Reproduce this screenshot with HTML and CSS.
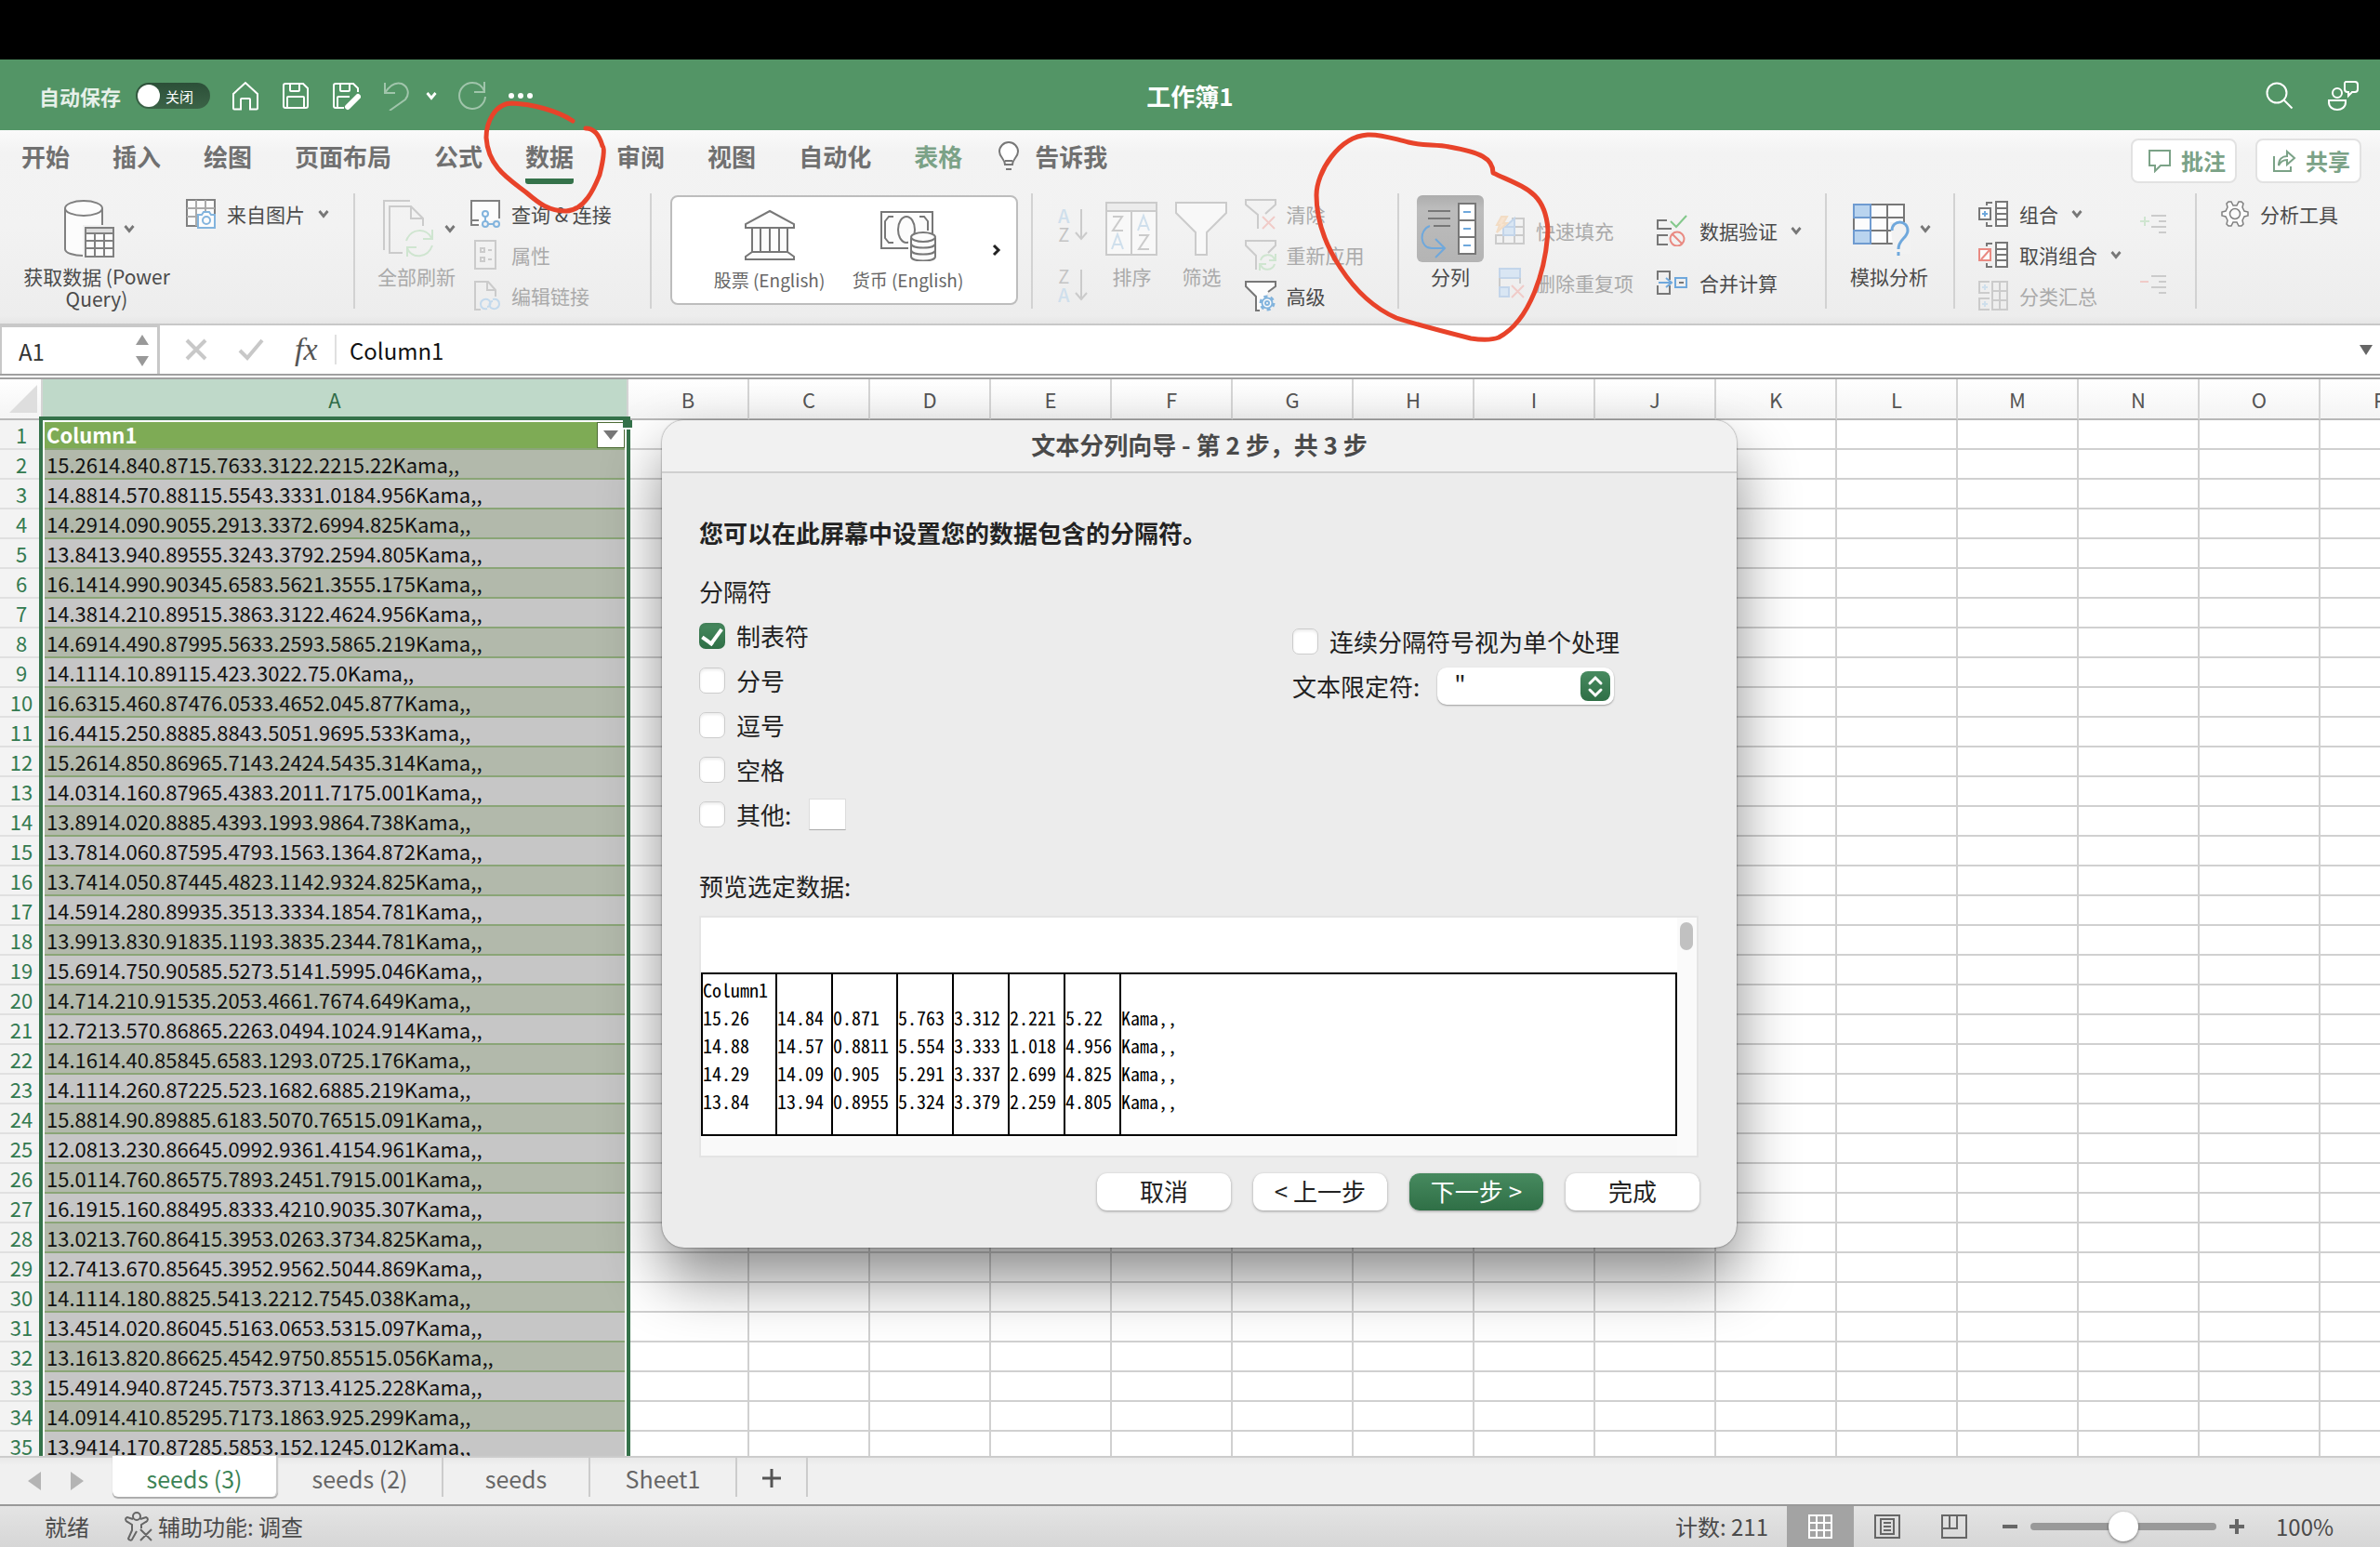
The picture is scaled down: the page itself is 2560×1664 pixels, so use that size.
FILE: index.html
```html
<!DOCTYPE html>
<html lang="zh-CN">
<head>
<meta charset="utf-8">
<title>工作簿1</title>
<link rel="stylesheet" href="styles.css">
</head>
<body>
<svg class="defs" aria-hidden="true">
  <symbol id="chev" viewBox="0 0 12 12"><path d="M1.5 3 6 8.500 10.500 3" fill="none" stroke="currentColor" stroke-width="2.800"/></symbol>
  <symbol id="outline" viewBox="0 0 28 22"><path d="M12 1h16M20 7h8M12 13h16M20 19h8" stroke="#cbcbcb" stroke-width="2" fill="none"/></symbol>
</svg>

<div class="notch"></div>

<header class="titlebar">
  <div class="quick">
    <label class="autosave" for="autosave">自动保存</label>
    <button class="toggle" id="autosave" type="button"><i></i>关闭</button>
    <button class="tool" type="button" aria-label="主页"><svg width="32" height="32" viewBox="0 0 32 32"><path d="M3 14 16 2l13 12v15.500a1 1 0 0 1-1 1h-7V20a1 1 0 0 0-1-1h-8a1 1 0 0 0-1 1v10.500H4a1 1 0 0 1-1-1z"/></svg></button>
    <button class="tool" type="button" aria-label="保存"><svg width="32" height="32" viewBox="0 0 32 32"><path d="M3 5a2 2 0 0 1 2-2h19l5 5v19a2 2 0 0 1-2 2H5a2 2 0 0 1-2-2zM10 3v7a1 1 0 0 0 1 1h8a1 1 0 0 0 1-1V3M7 29V18a1 1 0 0 1 1-1h16a1 1 0 0 1 1 1v11"/></svg></button>
    <button class="tool" type="button" aria-label="另存为"><svg width="32" height="32" viewBox="0 0 32 32"><path d="M14 29H5a2 2 0 0 1-2-2V5a2 2 0 0 1 2-2h19l5 5v4M10 3v7a1 1 0 0 0 1 1h8a1 1 0 0 0 1-1V3M7 29V18a1 1 0 0 1 1-1h12"/><path d="m18 28 11-11" stroke-width="6" stroke-linecap="round"/></svg></button>
    <div class="undo">
      <button class="tool dim" type="button" aria-label="撤消"><svg width="32" height="32" viewBox="0 0 32 32"><path d="M4 2v11h11M4 13C9 5 15 1 22 3c7 3 9 11 4 17L9 32"/></svg></button>
      <button class="tool" type="button" aria-label="撤消选项"><svg width="12" height="12"><use href="#chev"/></svg></button>
    </div>
    <button class="tool dim" type="button" aria-label="恢复"><svg width="32" height="32" viewBox="0 0 32 32"><path d="M29 1v11H18M29 11C26 4 20 2 16 2A14 14 0 1 0 30 17"/></svg></button>
    <button class="tool" type="button" aria-label="更多"><svg width="28" height="8" viewBox="0 0 28 8"><g class="solid"><circle cx="4" cy="4" r="3"/><circle cx="14" cy="4" r="3"/><circle cx="24" cy="4" r="3"/></g></svg></button>
  </div>
  <h1 class="doc">工作簿1</h1>
  <div class="account">
    <button class="tool" type="button" aria-label="搜索"><svg width="32" height="32" viewBox="0 0 32 32"><circle cx="13" cy="13" r="10.500"/><path d="m20.500 20.500 9 9"/></svg></button>
    <button class="tool" type="button" aria-label="状态"><svg width="36" height="36" viewBox="0 0 36 36"><circle cx="12" cy="15" r="5"/><path d="M3 23h18v2c0 5-4 8-9 8s-9-3-9-8zM21 3h10a3 3 0 0 1 3 3v5a3 3 0 0 1-3 3h-3l-4 4v-4h-1a3 3 0 0 1-3-3V5a2 2 0 0 1 1-2z"/></svg></button>
  </div>
</header>

<section class="ribbon">
  <nav class="tabs">
    <a href="#">开始</a><a href="#">插入</a><a href="#">绘图</a><a href="#">页面布局</a><a href="#">公式</a><a href="#" class="on">数据</a><a href="#">审阅</a><a href="#">视图</a><a href="#">自动化</a><a href="#" class="green">表格</a>
    <a href="#" class="tell"><svg width="24" height="32" viewBox="0 0 24 32" fill="#fff" stroke="#777" stroke-width="2"><path d="M8 25c0-6-6-8-6-14a10 10 0 0 1 20 0c0 6-6 8-6 14zM8 21h8"/><path d="M9 30h6"/></svg>告诉我</a>
    <div class="tabs-right">
      <button class="pill" type="button"><svg width="26" height="26" viewBox="0 0 26 26"><path d="M2 2h22v16H14l-6 6v-6H2z"/></svg>批注</button>
      <button class="pill" type="button"><svg width="26" height="26" viewBox="0 0 26 26"><path d="M2 8v16h18v-5M7 18c0-7 4-10 9-10V3l8 7-8 7v-5c-4 0-7 2-9 6z"/></svg>共享</button>
    </div>
  </nav>

  <div class="groups">
    <div class="group g-get">
      <button class="big wide" type="button">
        <span class="art split"><svg width="54" height="62" viewBox="0 0 54 62" fill="#fcfcfc" stroke="#808080" stroke-width="2"><path d="M1 9v44c0 4 9 7 20 7s20-3 20-7V9"/><ellipse cx="21" cy="9" rx="20" ry="8"/><path d="M20 27h34v35H20z" stroke="none" fill="#f2f2f2"/><path d="M23 30h30v31H23z"/><path d="M23 30h30v6H23z" fill="#ddd"/><path d="M23 44h30M23 52h30M33 36v25M43 36v25"/></svg><svg class="chev" width="12" height="12"><use href="#chev"/></svg></span>
        <span>获取数据 (Power Query)</span>
      </button>
      <div class="stack">
        <button class="small" type="button"><svg width="32" height="32" viewBox="0 0 32 32" fill="#fcfcfc" stroke="#808080" stroke-width="2"><path d="M1 1h30v28H1z"/><path d="M1 10h30M1 19h30M11 1v28M21 1v28" stroke="#aaa"/><path d="M13 17h4l2-3h6l2 3h4v14H13z" stroke="#83b4dd"/><circle cx="22" cy="23" r="4" stroke="#83b4dd"/></svg>来自图片<svg class="chev" width="12" height="12"><use href="#chev"/></svg></button>
      </div>
    </div>
    <span class="sep"></span>

    <div class="group g-conn">
      <button class="big" type="button" disabled>
        <span class="art split"><svg width="56" height="62" viewBox="0 0 56 62" fill="none" stroke="#cbcbcb" stroke-width="2"><path d="M1 54V1h28M21 57H7V7h23l13 13v8M30 7v13h13" /><g stroke="#cfe5d0"><path d="M53 32v10H43M52 41c-5-11-22-11-27 3M26 61V51h10M26 52c5 12 22 11 27-3"/></g></svg><svg class="chev" width="12" height="12"><use href="#chev"/></svg></span>
        <span>全部刷新</span>
      </button>
      <div class="stack">
        <button class="small" type="button"><svg width="32" height="32" viewBox="0 0 32 32" fill="none" stroke="#808080" stroke-width="2"><path d="M9 28H1V2h30v19M1 23h8" fill="#fcfcfc"/><g stroke="#83b4dd"><circle cx="16" cy="16" r="3"/><circle cx="16" cy="27" r="3"/><circle cx="28" cy="27" r="3"/><path d="M16 19v5M19 27h6"/></g></svg>查询 &amp; 连接</button>
        <button class="small" type="button" disabled><svg width="32" height="32" viewBox="0 0 32 32" fill="none" stroke="#cbcbcb" stroke-width="2"><path d="M5 1h22v30H5zM11 9h4v4h-4zM11 19h4v4h-4zM19 11h4M19 21h4"/></svg>属性</button>
        <button class="small" type="button" disabled><svg width="32" height="32" viewBox="0 0 32 32" fill="none" stroke="#cbcbcb" stroke-width="2"><path d="M11 31H5V1h14l8 9v7M18 1v9h9"/><path d="M18 30c-4 1-7-1-7-5s5-7 9-4c3 3 1 7-2 7M24 20c4-1 7 1 7 5s-5 7-9 4c-3-3-1-7 2-7" stroke="#c3d9ec"/></svg>编辑链接</button>
      </div>
    </div>
    <span class="sep"></span>

    <div class="group g-types">
      <div class="gallery">
        <button type="button"><svg width="56" height="56" viewBox="0 0 56 56" fill="#fcfcfc" stroke="#777" stroke-width="2"><path d="M28 2 54 16v4H2v-4zM9 20h38v26H9zM18 20v26M28 20v26M38 20v26M9 46h38l7 5v3H2v-3z"/></svg>股票 (English)</button>
        <button type="button"><svg width="60" height="56" viewBox="0 0 60 56" fill="#fcfcfc" stroke="#777" stroke-width="2"><path d="M1 3h55v39H1z"/><ellipse cx="28" cy="22" rx="9" ry="14"/><path d="M14 8H9l-4 5v18l4 5h5M42 8h5l4 5v10" fill="none"/><path d="M30 26h30v30H30z" stroke="none" fill="#fff"/><path d="M33 31v20c0 6 26 6 26 0V31"/><ellipse cx="46" cy="30" rx="13" ry="5"/><path d="M33 37c0 6 26 6 26 0M33 44c0 6 26 6 26 0" fill="none"/></svg>货币 (English)</button>
        <button type="button" class="more" aria-label="更多类型"><svg width="10" height="14" viewBox="0 0 10 14" fill="none" stroke="#222" stroke-width="3"><path d="m2 2 5 5-5 5"/></svg></button>
      </div>
    </div>
    <span class="sep"></span>

    <div class="group g-sort">
      <div class="az">
        <button type="button" disabled aria-label="升序"><span><b>A</b><br>Z</span><svg width="14" height="34" viewBox="0 0 14 34"><path d="M7 0v31M1 25l6 7 6-7"/></svg></button>
        <button type="button" disabled aria-label="降序"><span>Z<br><b>A</b></span><svg width="14" height="34" viewBox="0 0 14 34"><path d="M7 0v31M1 25l6 7 6-7"/></svg></button>
      </div>
      <button class="big" type="button" disabled>
        <span class="art"><svg width="56" height="58" viewBox="0 0 56 58" fill="none" stroke="#cbcbcb" stroke-width="2"><path d="M1 1h54v56H1z" fill="#f8f8f8"/><path d="M1 1h54v9H1z" fill="#ececec"/><path d="M28 10v47M8 16h10L8 31h11M36 36h10L36 51h11"/><path d="m35 31 6-16 6 16M37 26h8M7 51l6-16 6 16M9 46h8" stroke="#cfdfec"/></svg></span>
        <span>排序</span>
      </button>
      <button class="big" type="button" disabled>
        <span class="art"><svg width="56" height="58" viewBox="0 0 56 58" fill="#f8f8f8" stroke="#cbcbcb" stroke-width="2"><path d="M1 1h54v11L34 33v24H22V33L1 12z"/></svg></span>
        <span>筛选</span>
      </button>
      <div class="stack">
        <button class="small" type="button" disabled><svg width="34" height="34" viewBox="0 0 34 34" fill="none" stroke="#cbcbcb" stroke-width="2"><path d="M14 33V18L1 7V2h32v5l-11 10"/><path d="m19 20 13 13M32 20 19 33" stroke="#f0cbc8"/></svg>清除</button>
        <button class="small" type="button" disabled><svg width="34" height="34" viewBox="0 0 34 34" fill="none" stroke="#cbcbcb" stroke-width="2"><path d="M12 33V18L1 7V2h32v5l-8 8"/><path d="M33 16v7h-7M32 22c-3-7-13-6-15 1M16 34v-7h7M17 28c3 7 13 6 15-1" stroke="#cfe5d0"/></svg>重新应用</button>
        <button class="small" type="button"><svg width="34" height="34" viewBox="0 0 34 34" fill="#fcfcfc" stroke="#777" stroke-width="2"><path d="M16 33h-4V18L1 7V2h32v5l-8 6"/><circle cx="24" cy="25" r="7" stroke="#83b4dd" stroke-width="3" stroke-dasharray="4 3.300"/><circle cx="24" cy="25" r="5.500" stroke="#83b4dd"/><circle cx="24" cy="25" r="2" stroke="#83b4dd"/></svg>高级</button>
      </div>
    </div>
    <span class="sep"></span>

    <div class="group g-tools">
      <button class="big pressed" type="button">
        <span class="art"><svg width="64" height="64" viewBox="0 0 64 64" fill="none" stroke="#777" stroke-width="2"><path d="M8 13h24M8 21h24M14 29h18"/><path d="M41 5h18v54H41zM41 23h18M41 41h18" fill="#fff"/><path d="M46 14h8M46 32h8M46 50h8M10 29C-2 33-1 53 12 53h13M16 43l10 10-10 10" stroke="#6fa8dc"/></svg></span>
        <span>分列</span>
      </button>
      <div class="stack two">
        <button class="small" type="button" disabled><svg width="32" height="32" viewBox="0 0 32 32" fill="none" stroke="#cbcbcb" stroke-width="2"><path d="M1 21h30v9H1zM18 3h13v27M9 21v9M21 3v27M12 12h19"/><path d="M9 12h12v9H9zM12 11 21 3v9" fill="#d9e6f3" stroke="#c3d5ea"/><path d="M7 1h6l-4 7h4L2 18l3-8H2z" fill="#f7e3cf" stroke="#f2dcc4"/></svg>快速填充</button>
        <button class="small" type="button" disabled><svg width="32" height="34" viewBox="0 0 32 34" fill="none" stroke="#cbcbcb" stroke-width="2"><path d="M5 2h22v10H5z" fill="#d9e6f3" stroke="#c3d5ea"/><path d="M5 12v10M27 12v6"/><path d="M5 22h10v10H5z" fill="#d9e6f3" stroke="#c3d5ea"/><path d="m18 20 13 13M31 20 18 33" stroke="#f0cbc8"/></svg>删除重复项</button>
      </div>
      <div class="stack two second">
        <button class="small" type="button"><svg width="34" height="34" viewBox="0 0 34 34" fill="none" stroke="#777" stroke-width="2"><path d="M11 6H1v9h15M12 22H1v10h11"/><path d="m15 7 6 6L32 1" stroke="#83c88b"/><circle cx="22" cy="26" r="7.500" stroke="#e98a82"/><path d="m17 21 10 10" stroke="#e98a82"/></svg>数据验证<svg class="chev" width="12" height="12"><use href="#chev"/></svg></button>
        <button class="small" type="button"><svg width="34" height="34" viewBox="0 0 34 34" fill="none" stroke="#777" stroke-width="2"><path d="M1 14V5h13v9M1 20v9h13v-9"/><path d="M2 17h13M10 12l6 5-6 5M20 12h12v10H20z" stroke="#6fa8dc"/><path d="M24 17h5"/></svg>合并计算</button>
      </div>
    </div>
    <span class="sep"></span>

    <div class="group g-whatif">
      <button class="big" type="button">
        <span class="art split"><svg width="62" height="58" viewBox="0 0 62 58" fill="#fcfcfc" stroke="#777" stroke-width="2"><path d="M1 3h54v42H1zM37 3v42M1 17h54M1 31h54"/><path d="M1 3h18v14H1zM1 31h18v14H1zM1 17h18v14" fill="#b9d4ef" stroke="#6f9bd0"/><path d="M2 18h16v12H2z" stroke="none"/><path d="M40 22h22v34H44z" stroke="none" fill="#f2f2f2"/><path d="M42 31c0-12 17-12 17 0 0 8-10 9-10 20M49 54v4" fill="none" stroke="#6fa8dc" stroke-width="3"/></svg><svg class="chev" width="12" height="12"><use href="#chev"/></svg></span>
        <span>模拟分析</span>
      </button>
    </div>
    <span class="sep"></span>

    <div class="group g-outline">
      <div class="stack">
        <button class="small" type="button"><svg width="32" height="30" viewBox="0 0 32 30" fill="#fcfcfc" stroke="#777" stroke-width="2"><path d="M19 2h12v26H19zM19 9h12M19 15h12M19 21h12M1 9h12v12H1zM9 6V3h6M9 24v4h6"/><path d="M4 15h6M7 12v6" stroke="#6fa8dc"/></svg>组合<svg class="chev" width="12" height="12"><use href="#chev"/></svg></button>
        <button class="small" type="button"><svg width="32" height="30" viewBox="0 0 32 30" fill="#fcfcfc" stroke="#777" stroke-width="2"><path d="M19 2h12v26H19zM19 9h12M19 15h12M19 21h12M9 6V3h6M9 24v4h6"/><path d="M1 9h12v12H1zM3 20l9-10" stroke="#e98a82"/></svg>取消组合<svg class="chev" width="12" height="12"><use href="#chev"/></svg></button>
        <button class="small" type="button" disabled><svg width="32" height="34" viewBox="0 0 32 34" fill="none" stroke="#cbcbcb" stroke-width="2"><path d="M15 2h16v30H15zM23 2v30M15 12h16M15 22h16M12 2H1v12h11M12 20H1v12h11"/><path d="M4 8h6M7 5v6M4 26h6M7 23v6" stroke="#cfdfec"/></svg>分类汇总</button>
      </div>
      <div class="levels">
        <button type="button" disabled aria-label="显示明细"><svg width="28" height="22" viewBox="0 0 28 22"><use href="#outline"/><path d="M0 7h10M5 2v10" stroke="#cfe5d0" stroke-width="2"/></svg></button>
        <button type="button" disabled aria-label="隐藏明细"><svg width="28" height="22" viewBox="0 0 28 22"><use href="#outline"/><path d="M0 7h9" stroke="#f0cbc8" stroke-width="2"/></svg></button>
      </div>
    </div>
    <span class="sep"></span>

    <div class="group g-analysis">
      <div class="stack">
        <button class="small" type="button"><svg width="30" height="30" viewBox="0 0 30 30" fill="#fcfcfc" stroke="#808080" stroke-width="1.500"><path d="M8 2h3l2 4h4l2-4h3l2 2-1 4 2 4 4 1v4l-4 1-2 4 1 4-2 2h-3l-2-4h-4l-2 4H8l-2-2 1-4-2-4-4-1v-4l4-1 2-4-1-4z"/><circle cx="15" cy="15" r="5.500"/></svg>分析工具</button>
      </div>
    </div>
  </div>
</section>

<section class="formula">
  <div class="namebox">
    <input type="text" value="A1" aria-label="名称框">
    <svg width="16" height="36" viewBox="0 0 16 36" fill="#999"><path d="M8 1l7 11H1zM8 35l7-11H1z"/></svg>
  </div>
  <div class="fx">
    <svg width="24" height="24" viewBox="0 0 24 24" fill="none" stroke="#c8c8c8" stroke-width="4"><path d="m2 2 20 20M22 2 2 22"/></svg>
    <svg width="28" height="24" viewBox="0 0 28 24" fill="none" stroke="#c8c8c8" stroke-width="4"><path d="m2 13 8 8L26 2"/></svg>
    <span class="fn">fx</span>
  </div>
  <input class="content" type="text" value="Column1" aria-label="编辑栏">
  <svg width="14" height="11" viewBox="0 0 14 11" fill="#666"><path d="M0 0h14L7 11z"/></svg>
</section>

<main class="sheet">
  <table class="cells">
    <colgroup><col class="c-row"><col class="c-a"><col span="15" class="c-n"></colgroup>
    <thead><tr><th class="corner"><svg width="30" height="30" viewBox="0 0 30 30"><path d="M30 0v30H0z" fill="#dedede"/></svg></th><th class="sel">A</th><th>B</th><th>C</th><th>D</th><th>E</th><th>F</th><th>G</th><th>H</th><th>I</th><th>J</th><th>K</th><th>L</th><th>M</th><th>N</th><th>O</th><th>P</th></tr></thead>
    <tbody>
      <tr class="head"><th>1</th><td>Column1</td><td colspan="15"></td></tr>
      <tr><th>2</th><td>15.2614.840.8715.7633.3122.2215.22Kama,,</td><td colspan="15"></td></tr>
      <tr><th>3</th><td>14.8814.570.88115.5543.3331.0184.956Kama,,</td><td colspan="15"></td></tr>
      <tr><th>4</th><td>14.2914.090.9055.2913.3372.6994.825Kama,,</td><td colspan="15"></td></tr>
      <tr><th>5</th><td>13.8413.940.89555.3243.3792.2594.805Kama,,</td><td colspan="15"></td></tr>
      <tr><th>6</th><td>16.1414.990.90345.6583.5621.3555.175Kama,,</td><td colspan="15"></td></tr>
      <tr><th>7</th><td>14.3814.210.89515.3863.3122.4624.956Kama,,</td><td colspan="15"></td></tr>
      <tr><th>8</th><td>14.6914.490.87995.5633.2593.5865.219Kama,,</td><td colspan="15"></td></tr>
      <tr><th>9</th><td>14.1114.10.89115.423.3022.75.0Kama,,</td><td colspan="15"></td></tr>
      <tr><th>10</th><td>16.6315.460.87476.0533.4652.045.877Kama,,</td><td colspan="15"></td></tr>
      <tr><th>11</th><td>16.4415.250.8885.8843.5051.9695.533Kama,,</td><td colspan="15"></td></tr>
      <tr><th>12</th><td>15.2614.850.86965.7143.2424.5435.314Kama,,</td><td colspan="15"></td></tr>
      <tr><th>13</th><td>14.0314.160.87965.4383.2011.7175.001Kama,,</td><td colspan="15"></td></tr>
      <tr><th>14</th><td>13.8914.020.8885.4393.1993.9864.738Kama,,</td><td colspan="15"></td></tr>
      <tr><th>15</th><td>13.7814.060.87595.4793.1563.1364.872Kama,,</td><td colspan="15"></td></tr>
      <tr><th>16</th><td>13.7414.050.87445.4823.1142.9324.825Kama,,</td><td colspan="15"></td></tr>
      <tr><th>17</th><td>14.5914.280.89935.3513.3334.1854.781Kama,,</td><td colspan="15"></td></tr>
      <tr><th>18</th><td>13.9913.830.91835.1193.3835.2344.781Kama,,</td><td colspan="15"></td></tr>
      <tr><th>19</th><td>15.6914.750.90585.5273.5141.5995.046Kama,,</td><td colspan="15"></td></tr>
      <tr><th>20</th><td>14.714.210.91535.2053.4661.7674.649Kama,,</td><td colspan="15"></td></tr>
      <tr><th>21</th><td>12.7213.570.86865.2263.0494.1024.914Kama,,</td><td colspan="15"></td></tr>
      <tr><th>22</th><td>14.1614.40.85845.6583.1293.0725.176Kama,,</td><td colspan="15"></td></tr>
      <tr><th>23</th><td>14.1114.260.87225.523.1682.6885.219Kama,,</td><td colspan="15"></td></tr>
      <tr><th>24</th><td>15.8814.90.89885.6183.5070.76515.091Kama,,</td><td colspan="15"></td></tr>
      <tr><th>25</th><td>12.0813.230.86645.0992.9361.4154.961Kama,,</td><td colspan="15"></td></tr>
      <tr><th>26</th><td>15.0114.760.86575.7893.2451.7915.001Kama,,</td><td colspan="15"></td></tr>
      <tr><th>27</th><td>16.1915.160.88495.8333.4210.9035.307Kama,,</td><td colspan="15"></td></tr>
      <tr><th>28</th><td>13.0213.760.86415.3953.0263.3734.825Kama,,</td><td colspan="15"></td></tr>
      <tr><th>29</th><td>12.7413.670.85645.3952.9562.5044.869Kama,,</td><td colspan="15"></td></tr>
      <tr><th>30</th><td>14.1114.180.8825.5413.2212.7545.038Kama,,</td><td colspan="15"></td></tr>
      <tr><th>31</th><td>13.4514.020.86045.5163.0653.5315.097Kama,,</td><td colspan="15"></td></tr>
      <tr><th>32</th><td>13.1613.820.86625.4542.9750.85515.056Kama,,</td><td colspan="15"></td></tr>
      <tr><th>33</th><td>15.4914.940.87245.7573.3713.4125.228Kama,,</td><td colspan="15"></td></tr>
      <tr><th>34</th><td>14.0914.410.85295.7173.1863.925.299Kama,,</td><td colspan="15"></td></tr>
      <tr><th>35</th><td>13.9414.170.87285.5853.152.1245.012Kama,,</td><td colspan="15"></td></tr>
    </tbody>
  </table>
  <div class="selection"><button class="filter" type="button" aria-label="筛选 Column1"></button><i class="handle"></i></div>
</main>

<nav class="sheets">
  <div class="arrows"><svg width="60" height="20" viewBox="0 0 60 20" fill="#b4b4b4"><path d="M14 0v20L0 10zM46 0v20l14-10z"/></svg></div>
  <a href="#" class="on">seeds (3)</a>
  <a href="#">seeds (2)</a>
  <a href="#" class="mid">seeds</a>
  <a href="#" class="mid">Sheet1</a>
  <button type="button" aria-label="新建工作表"><svg width="20" height="20" viewBox="0 0 20 20" stroke="#555" stroke-width="3"><path d="M0 10h20M10 0v20"/></svg></button>
</nav>

<footer class="status">
  <span class="ready">就绪</span>
  <span class="a11y"><svg width="30" height="32" viewBox="0 0 30 32" fill="none" stroke="#666" stroke-width="2"><circle cx="13" cy="5" r="4"/><path d="M9 8 3 6c-3 1-2 4 0 5l5 3v6L4 29c1 2 3 2 4 1l5-9M17 8l6-2c3 1 2 4 0 5l-5 3v4M17 19l12 12M29 19 17 31"/></svg>辅助功能: 调查</span>
  <span class="count">计数: 211</span>
  <div class="views">
    <button type="button" class="on" aria-label="普通"><svg width="26" height="28" viewBox="0 0 26 28" fill="none" stroke="#fff" stroke-width="2"><path d="M1 2h24v24H1zM1 10h24M1 18h24M9 2v24M17 2v24"/></svg></button>
    <button type="button" aria-label="页面布局"><svg width="28" height="28" viewBox="0 0 28 28" fill="none" stroke="#666" stroke-width="2"><path d="M1 2h26v24H1zM7 6h14v16H7zM10 10h8M10 14h8M10 18h8"/></svg></button>
    <button type="button" aria-label="分页预览"><svg width="28" height="28" viewBox="0 0 28 28" fill="none" stroke="#666" stroke-width="2"><path d="M1 2h26v24H1zM1 16h16V2M9 2v14"/></svg></button>
  </div>
  <div class="zoom">
    <button type="button" aria-label="缩小"><svg width="16" height="16" viewBox="0 0 16 16"><path d="M0 8h16" stroke="#666" stroke-width="4"/></svg></button>
    <input type="range" min="0" max="100" value="50" aria-label="缩放">
    <button type="button" aria-label="放大"><svg width="16" height="16" viewBox="0 0 16 16"><path d="M0 8h16M8 0v16" stroke="#666" stroke-width="4"/></svg></button>
    <span class="percent">100%</span>
  </div>
</footer>

<form class="dialog">
  <h2>文本分列向导 - 第 2 步，共 3 步</h2>
  <div class="dialog-body">
    <p class="lead">您可以在此屏幕中设置您的数据包含的分隔符。</p>
    <div class="options">
      <fieldset class="delims">
        <legend>分隔符</legend>
        <label><input type="checkbox" checked>制表符</label>
        <label><input type="checkbox">分号</label>
        <label><input type="checkbox">逗号</label>
        <label><input type="checkbox">空格</label>
        <div class="other"><label><input type="checkbox">其他:</label><input type="text" aria-label="其他分隔符"></div>
      </fieldset>
      <div class="treat">
        <label><input type="checkbox">连续分隔符号视为单个处理</label>
        <div class="qualifier">
          <label for="qual">文本限定符:</label>
          <div class="select"><select id="qual"><option>"</option></select><svg width="32" height="32" viewBox="0 0 32 32" fill="none" stroke="#fff" stroke-width="3" stroke-linecap="round"><path d="m10 13 6-6 6 6M10 20l6 6 6-6"/></svg></div>
        </div>
      </div>
    </div>
    <p class="caption">预览选定数据:</p>
    <div class="preview">
      <table>
        <colgroup><col class="p-80"><col class="p-60"><col class="p-70"><col class="p-60"><col class="p-60"><col class="p-60"><col class="p-60"><col></colgroup>
        <tr><td>Column1</td><td></td><td></td><td></td><td></td><td></td><td></td><td></td></tr>
        <tr><td>15.26</td><td>14.84</td><td>0.871</td><td>5.763</td><td>3.312</td><td>2.221</td><td>5.22</td><td>Kama,,</td></tr>
        <tr><td>14.88</td><td>14.57</td><td>0.8811</td><td>5.554</td><td>3.333</td><td>1.018</td><td>4.956</td><td>Kama,,</td></tr>
        <tr><td>14.29</td><td>14.09</td><td>0.905</td><td>5.291</td><td>3.337</td><td>2.699</td><td>4.825</td><td>Kama,,</td></tr>
        <tr><td>13.84</td><td>13.94</td><td>0.8955</td><td>5.324</td><td>3.379</td><td>2.259</td><td>4.805</td><td>Kama,,</td></tr>
      </table>
      <div class="track"><i></i></div>
    </div>
    <div class="actions">
      <button type="button">取消</button>
      <button type="button">&lt; 上一步</button>
      <button type="button" class="primary">下一步 &gt;</button>
      <button type="button">完成</button>
    </div>
  </div>
</form>

<svg class="ink" width="1700" height="400" viewBox="0 0 1700 400" aria-hidden="true">
  <path d="M616 130C600 119 572 112 551 111C532 111 523 132 523 148C525 180 548 193 566 207C580 219 590 227 609 227C630 226 640 200 645 188C649 172 651 158 648 157C644 143 637 138 630 138"/>
  <path d="M1606 186C1606 170 1592 164 1559 158C1545 155 1530 157 1515 153C1498 149 1485 144 1471 145C1440 147 1416 185 1416 210C1416 262 1456 322 1502 342C1526 350 1550 356 1582 364C1596 366 1604 366 1612 363C1646 345 1663 290 1665 247C1662 206 1640 202 1606 186Z"/>
</svg>
</body>
</html>
```
FILE: styles.css
```css
* { box-sizing: border-box; }

body {
  margin: 0;
  height: 100vh;
  display: flex;
  flex-direction: column;
  position: relative;
  overflow: hidden;
  font-family: "Noto Sans CJK SC", "Noto Sans", sans-serif;
  font-size: 22px;
  color: #4a4a4a;
  background: #fff;
}

button, input, select {
  font: inherit;
  color: inherit;
  margin: 0;
  padding: 0;
  border: 0;
  background: none;
}

a { color: inherit; text-decoration: none; }
svg { display: block; flex: none; }
.defs { position: absolute; width: 0; height: 0; }
.notch { height: 64px; flex: none; background: #000; }

/* Title bar */
.titlebar {
  flex: none;
  height: 76px;
  display: grid;
  grid-template-columns: 1fr auto 1fr;
  align-items: center;
  padding: 2px 22px 0;
  background: #539566;
  color: #fff;
}
.quick { display: flex; align-items: center; gap: 22px; padding-left: 20px; }
.autosave { margin-right: -6px; font-weight: 700; color: #e6f0e9; }
.toggle {
  width: 80px;
  height: 28px;
  display: flex;
  align-items: center;
  gap: 6px;
  padding: 0 2px;
  border-radius: 14px;
  background: linear-gradient(#2c4f38, #3b6347);
  font-size: 15px;
}
.toggle i { width: 24px; height: 24px; border-radius: 50%; background: #fff; }
.tool svg { fill: none; stroke: #fff; stroke-width: 2; color: #fff; }
.tool .solid { fill: #fff; stroke: none; }
.dim { opacity: .45; }
.undo { display: flex; align-items: center; gap: 16px; }
.doc { margin: 0; font-size: 26px; line-height: 36px; font-weight: 700; }
.account { justify-self: end; display: flex; align-items: center; gap: 34px; }

/* Ribbon */
.ribbon {
  flex: none;
  background: linear-gradient(#fafafa, #f3f3f3 24px, #f2f2f2 50%, #ededed 96%, #e6e6e6);
  border-bottom: 2px solid #c8c8c8;
}
.tabs {
  display: flex;
  align-items: center;
  gap: 46px;
  height: 68px;
  padding: 0 20px 0 23px;
  font-size: 26px;
  line-height: 36px;
  font-weight: 700;
  color: #707070;
}
.tabs > a { padding: 0 0 12px; }
.tabs .on { padding-bottom: 6px; border-bottom: 6px solid #35724a; border-radius: 3px; }
.tabs .green { color: #7ba287; }
.tabs .tell { display: flex; align-items: center; gap: 16px; margin-left: -8px; }
.tabs-right { margin-left: auto; display: flex; gap: 20px; padding-bottom: 2px; }
.pill {
  display: flex;
  align-items: center;
  gap: 10px;
  width: 114px;
  height: 48px;
  padding: 0 0 0 16px;
  border: 2px solid #e2e2e2;
  border-radius: 8px;
  background: #fff;
  color: #7ba287;
  font-size: 24px;
  font-weight: 700;
}
.pill svg { fill: none; stroke: #7ba287; stroke-width: 2; }
.groups { display: flex; align-items: flex-start; height: 140px; font-size: 21px; line-height: 24px; }
.sep { flex: none; width: 2px; height: 124px; background: #d2d2d2; }
.group { display: flex; flex: none; }
.groups button { white-space: nowrap; }
.groups button:disabled { color: #aaa; }
.chev { color: #777; }
.big { display: flex; flex-direction: column; align-items: center; gap: 3px; margin-top: 2px; }
.big.wide { width: 164px; }
.groups .wide { white-space: normal; }
.art { display: flex; align-items: center; gap: 10px; height: 72px; }
.split { padding-left: 6px; }
.pressed .art { padding: 0 4px; border-radius: 6px; background: linear-gradient(#adadad, #bcbcbc 20%, #b4b4b4); }
.stack { display: flex; flex-direction: column; }
.small { display: flex; align-items: center; gap: 12px; height: 44px; text-align: left; }
.small .chev { margin-left: 2px; }
.two { padding-top: 12px; }
.two .small { height: 56px; }

.g-get { width: 380px; padding-left: 22px; gap: 14px; }
.g-conn { width: 317px; padding-left: 24px; gap: 16px; }
.g-types { width: 408px; padding: 2px 20px 0; }
.g-sort { width: 392px; padding-left: 27px; gap: 19px; }
.g-sort .small { gap: 10px; }
.g-tools { width: 458px; padding-left: 19px; gap: 12px; }
.g-whatif { width: 136px; padding-left: 22px; }
.g-outline { width: 258px; padding-left: 25px; gap: 20px; }
.g-analysis { flex: 1; padding-left: 26px; }
.second { margin-left: 13px; }

.gallery {
  flex: 1;
  display: flex;
  height: 118px;
  padding-left: 30px;
  border: 2px solid #bdbdbd;
  border-radius: 8px;
  background: #fff;
  font-size: 19px;
  color: #666;
}
.gallery button { display: flex; flex-direction: column; align-items: center; justify-content: center; gap: 8px; width: 149px; }
.gallery .more { width: 42px; }
.az { display: flex; flex-direction: column; gap: 30px; padding-top: 16px; }
.az button { display: flex; align-items: center; gap: 6px; height: 35px; font-size: 20px; line-height: 20px; }
.groups .az button { color: #c4c4c4; }
.az b { color: #cfdfec; font-weight: 500; }
.az svg { fill: none; stroke: #cbcbcb; stroke-width: 2; }
.levels { display: flex; flex-direction: column; gap: 43px; padding-top: 23px; }

/* Formula bar */
.formula {
  flex: none;
  display: flex;
  align-items: center;
  height: 58px;
  padding-right: 8px;
  border-bottom: 6px double #a0a0a0;
  background: #fff;
  font-size: 24px;
  color: #111;
}
.namebox {
  align-self: stretch;
  display: flex;
  align-items: center;
  width: 172px;
  padding: 0 8px 0 18px;
  border: 2px solid #c8c8c8;
  border-width: 2px 3px 0 2px;
  color: #333;
}
.namebox input { flex: 1; min-width: 0; }
.fx { display: flex; align-items: center; gap: 33px; width: 190px; height: 32px; padding-left: 27px; border-right: 2px solid #e0e0e0; }
.fn { font: italic 34px/30px "Liberation Serif", serif; color: #555; }
.content { flex: 1; padding-left: 14px; }

/* Sheet */
.sheet { flex: 1; min-height: 0; position: relative; overflow: hidden; }
.cells { table-layout: fixed; width: 2626px; border-spacing: 0; color: #111; }
.c-row { width: 46px; }
.c-a { width: 630px; }
.c-n { width: 130px; }
.cells th { padding: 0; font-weight: 400; text-align: center; }
.cells thead th {
  height: 44px;
  line-height: 38px;
  background: linear-gradient(#fff, #f4f4f4);
  border-right: 2px solid #d4d4d4;
  border-bottom: 2px solid #b8b8b8;
  color: #555;
}
.cells thead .sel { background: #bfd9c9; color: #2f6b47; }
.corner svg { margin-left: 10px; }
.cells tbody th { height: 32px; background: #f3f3f3; border-bottom: 2px solid #e0e0e0; color: #337a50; line-height: 30px; }
.cells td { height: 32px; padding: 0; line-height: 30px; border-bottom: 2px solid #d0d0d0; white-space: nowrap; }
.cells td:nth-child(2) { padding-left: 4px; background: #c6c6c6; border-bottom-color: #8aa577; }
.cells tr:nth-child(even) td:nth-child(2) { background: #b2b9ab; }
.cells .head td:nth-child(2) { background: #7eab55; color: #fff; font-weight: 700; }
.cells td:nth-child(3) { background: repeating-linear-gradient(to right, transparent 0 128px, #d0d0d0 128px 130px); }
.selection { position: absolute; left: 42px; top: 40px; width: 636px; bottom: -8px; border: 4px solid #35724a; box-shadow: inset 0 0 0 2px #fff; }
.filter { position: absolute; right: 2px; top: 2px; width: 30px; height: 28px; display: grid; place-items: center; border: 1px solid #4d6b35; background: #fff; }
.filter::before { content: ""; border: 8px solid transparent; border-width: 10px 8px 0; border-top-color: #777; }
.handle { position: absolute; right: -6px; top: 0; width: 10px; height: 8px; background: #35724a; box-shadow: 0 2px #fff; }

/* Sheet tabs */
.sheets {
  flex: none;
  display: flex;
  height: 54px;
  border-top: 2px solid #ccc;
  border-bottom: 2px solid #999;
  background: linear-gradient(#e8e8e8, #f0f0f0 8px);
  font-size: 25px;
  line-height: 44px;
  color: #666;
}
.arrows { width: 121px; padding: 15px 0 0 30px; }
.sheets a { width: 178px; height: 42px; border-right: 2px solid #ccc; text-align: center; }
.sheets .mid { width: 158px; }
.sheets .on { height: 44px; margin-top: -2px; background: #fff; color: #3c8355; border-radius: 0 0 6px 6px; box-shadow: 0 2px 1px #aaa; line-height: 48px; }
.sheets button { width: 76px; height: 42px; display: grid; place-items: center; padding-top: 2px; border-right: 2px solid #ccc; }

/* Status bar */
.status { flex: none; display: flex; align-items: center; height: 44px; padding-left: 48px; background: linear-gradient(#e4e4e4, #d6d6d6); font-size: 24px; line-height: 32px; }
.a11y { display: flex; align-items: center; gap: 6px; margin-left: 38px; }
.count { margin-left: auto; }
.views { display: flex; align-self: stretch; margin-left: 20px; }
.views button { width: 72px; display: grid; place-items: center; }
.views .on { background: #a3a3a3; }
.zoom { display: flex; align-items: center; gap: 14px; padding: 0 50px 0 16px; }
.zoom input { appearance: none; width: 200px; height: 8px; border-radius: 4px; background: #999; }
.zoom input::-webkit-slider-thumb { appearance: none; width: 32px; height: 32px; border-radius: 50%; background: #fff; box-shadow: 0 1px 3px rgba(0, 0, 0, .5); }
.percent { width: 62px; margin-left: 20px; }

/* Wizard dialog */
.dialog {
  position: absolute;
  left: calc(50% - 568px);
  top: 452px;
  width: 1156px;
  border-radius: 24px;
  background: #ececec;
  color: #222;
  font-size: 26px;
  line-height: 36px;
  box-shadow: 0 0 2px rgba(0, 0, 0, .6), 0 34px 64px rgba(0, 0, 0, .45);
  overflow: hidden;
}
.dialog h2 { margin: 0; height: 57px; line-height: 52px; font-size: 26px; font-weight: 700; text-align: center; color: #4a4a4a; background: #f1f1f1; border-bottom: 2px solid #cfcfcf; }
.dialog-body { padding: 46px 40px 40px; }
.dialog p { margin: 0; }
.lead { font-weight: 700; }
.options { display: flex; margin-top: 27px; }
.delims { width: 638px; margin: 0; padding: 0; border: 0; }
.delims legend { padding: 0; margin-bottom: 6px; }
.dialog label { display: flex; align-items: center; gap: 12px; height: 48px; }
.dialog input[type="checkbox"] { appearance: none; width: 28px; height: 28px; border: 1px solid #ccc; border-radius: 7px; background: #fff; box-shadow: inset 0 2px 3px rgba(0, 0, 0, .08); }
.dialog input[type="checkbox"]:checked { border: 0; background: linear-gradient(#478a5f, #2f6f46); display: grid; place-items: center; }
.dialog input[type="checkbox"]:checked::after { content: ""; width: 10px; height: 17px; margin-top: -4px; border: solid #fff; border-width: 0 4px 4px 0; transform: rotate(36deg); }
.other { display: flex; align-items: center; gap: 19px; }
.other > input { width: 40px; height: 34px; background: #fff; border: 1px solid #ddd; border-bottom-color: #aaa; }
.treat { padding-top: 48px; }
.qualifier { display: flex; align-items: center; gap: 19px; }
.select { position: relative; }
.select select { appearance: none; display: block; width: 190px; height: 40px; padding-left: 18px; border-radius: 10px; background: #fff; box-shadow: 0 1px 2px rgba(0, 0, 0, .35); }
.select svg { position: absolute; right: 4px; top: 4px; border-radius: 8px; background: linear-gradient(#478a5f, #2f6f46); pointer-events: none; }
.dialog .caption { margin-top: 35px; }
.preview { display: flex; width: 1075px; height: 260px; margin-top: 14px; border: 2px solid #e4e4e4; background: linear-gradient(#fff 237px, #f9f9f9 237px); }
.preview table { flex: 1; table-layout: fixed; width: 1050px; height: 176px; margin-top: 59px; border: 2px solid #000; border-collapse: collapse; font: 20px/30px "Noto Sans Mono CJK SC", "Liberation Mono", monospace; color: #000; background: #fff; }
.preview td { height: 30px; padding: 0; border-right: 2px solid #000; white-space: nowrap; }
.preview tr:first-child td { padding-top: 2px; }
.preview tr:last-child td { padding-bottom: 20px; }
.p-80 { width: 80px; }
.p-70 { width: 70px; }
.p-60 { width: 60px; }
.track { width: 21px; padding: 5px 3px; background: #fafafa; }
.track i { display: block; width: 14px; height: 30px; border-radius: 7px; background: #c1c1c1; }
.actions { display: flex; justify-content: flex-end; gap: 24px; margin-top: 17px; }
.actions button { width: 144px; height: 40px; padding-bottom: 2px; border-radius: 11px; background: #fff; box-shadow: 0 1px 3px rgba(0, 0, 0, .35); line-height: 36px; }
.actions .primary { background: linear-gradient(#478a5f, #2f6f46); color: #fff; }

/* Hand-drawn marks */
.ink { position: absolute; left: 0; top: 0; fill: none; stroke: #e8432a; stroke-width: 5; stroke-linecap: round; stroke-linejoin: round; pointer-events: none; }
```
